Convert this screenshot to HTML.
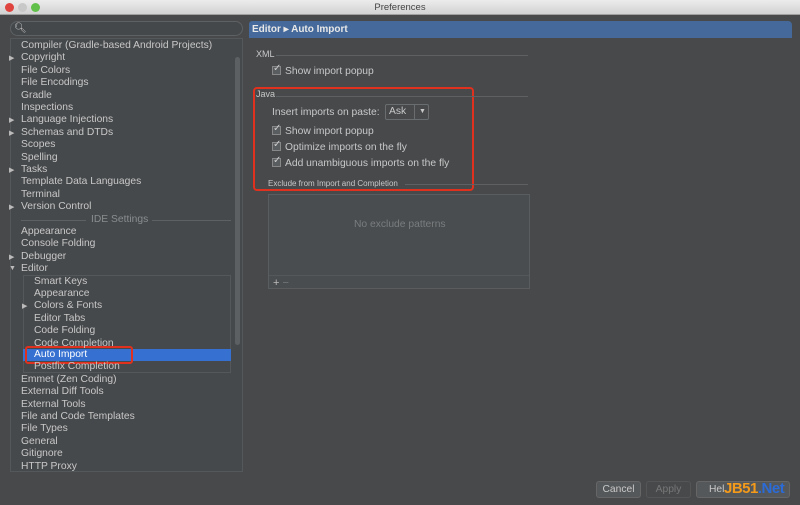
<!DOCTYPE html>
<html><head><style>
*{margin:0;padding:0;box-sizing:border-box}
body{width:800px;height:505px;background:#47494b;font-family:"Liberation Sans",sans-serif;font-size:10.3px;color:#c8c8c8;position:relative;overflow:hidden}
.abs{position:absolute}
.title{left:0;top:0;width:800px;height:15px;background:linear-gradient(#ececec,#d2d2d2);border-bottom:1px solid #a0a0a0;text-align:center;color:#444;font-size:9.5px;line-height:15px}
.dot{width:9px;height:9px;border-radius:50%;top:3px}
.tree{left:10px;top:38px;width:233px;height:434px;border:1px solid #55585a;background:#46494b}
.row{position:absolute;height:12.4px;line-height:12.4px;white-space:nowrap;font-size:10.3px}
.arr{position:absolute;font-size:7px;color:#bbb}
.cb{display:inline-block;width:9px;height:9px;border:1px solid #888;background:#5a5d5f;vertical-align:-1px;margin-right:4px;position:relative}
.cb:after{content:"✓";position:absolute;left:0;top:-4px;font-size:10px;color:#ccc}
.line{height:1px;background:#5e6163}
</style></head><body>
<div class="abs title">Preferences</div>
<div class="abs dot" style="left:5px;background:#e0443e"></div>
<div class="abs dot" style="left:18px;background:#c8c8c8"></div>
<div class="abs dot" style="left:31px;background:#60c04a"></div>
<div class="abs" style="left:10px;top:21px;width:233px;height:15px;border:1px solid #5e6163;border-radius:8px;background:#45484a"></div>
<div class="abs" style="left:14px;top:23px;font-size:10px;color:#ccc">&#x1F50D;&#xFE0E;</div>
<div class="abs tree"></div>
<div class="abs" style="left:235px;top:57px;width:5px;height:288px;background:#5d6062;border-radius:3px"></div>
<div class="abs" style="left:23px;top:275px;width:208px;height:98px;border:1px solid #55585a"></div>
<div class="abs" style="left:23px;top:349px;width:208px;height:12.4px;background:#3670d0"></div>
<div class="abs" style="left:25px;top:346px;width:108px;height:18px;border:2px solid #e0301e;border-radius:3px"></div>
<div id="t"></div>
<div class="abs line" style="left:21px;top:220px;width:65px"></div>
<div class="abs line" style="left:152px;top:220px;width:79px"></div>
<div class="abs" style="left:249px;top:21px;width:543px;height:17px;background:#45699a;border-radius:3px 4px 0 0;color:#e8e8e8;font-weight:bold;font-size:10px;line-height:17px;padding-left:3px">Editor ▸ Auto Import</div>
<div class="abs" style="left:256px;top:49px;font-size:9px">XML</div>
<div class="abs line" style="left:276px;top:55px;width:252px"></div>
<div class="abs" style="left:272px;top:66px"><span class="cb"></span>Show import popup</div>
<div class="abs" style="left:253px;top:87px;width:221px;height:104px;border:2px solid #e0301e;border-radius:4px"></div>
<div class="abs" style="left:256px;top:89px;font-size:9px">Java</div>
<div class="abs line" style="left:276px;top:96px;width:252px"></div>
<div class="abs" style="left:272px;top:107px">Insert imports on paste:</div>
<div class="abs" style="left:385px;top:104px;width:44px;height:16px;border:1px solid #6a6d6f;border-radius:2px;line-height:14px;padding-left:3px">Ask<span style="position:absolute;left:28px;top:0;height:14px;border-left:1px solid #6a6d6f;padding-left:4px;font-size:7px">▼</span></div>
<div class="abs" style="left:272px;top:126px"><span class="cb"></span>Show import popup</div>
<div class="abs" style="left:272px;top:142px"><span class="cb"></span>Optimize imports on the fly</div>
<div class="abs" style="left:272px;top:158px"><span class="cb"></span>Add unambiguous imports on the fly</div>
<div class="abs" style="left:268px;top:179px;font-size:8px">Exclude from Import and Completion</div>
<div class="abs line" style="left:405px;top:184px;width:123px"></div>
<div class="abs" style="left:268px;top:194px;width:262px;height:95px;border:1px solid #5a5d5f;background:#4a4d4f"></div>
<div class="abs line" style="left:269px;top:275px;width:260px;background:#55585a"></div>
<div class="abs" style="left:354px;top:219px;color:#7a7d7f">No exclude patterns</div>
<div class="abs" style="left:273px;top:277px;font-size:11px;color:#bbb">+ <span style="color:#777">−</span></div>
<div class="abs" style="left:596px;top:481px;width:45px;height:17px;border:1px solid #666;border-radius:3px;background:#55585a;text-align:center;line-height:15px">Cancel</div>
<div class="abs" style="left:646px;top:481px;width:45px;height:17px;border:1px solid #555;border-radius:3px;text-align:center;line-height:15px;color:#777">Apply</div>
<div class="abs" style="left:696px;top:481px;width:94px;height:17px;border:1px solid #666;border-radius:3px;background:#55585a;line-height:15px;padding-left:12px">Hel</div>
<div class="abs" style="left:724px;top:480px;font-size:15px;font-weight:bold;color:#f49a1a;letter-spacing:-0.5px">JB51<span style="color:#2b6bd8">.Net</span></div>
<script>
var r=[["Compiler (Gradle-based Android Projects)",0],["Copyright",1],["File Colors",0],["File Encodings",0],["Gradle",0],["Inspections",0],["Language Injections",1],["Schemas and DTDs",1],["Scopes",0],["Spelling",0],["Tasks",1],["Template Data Languages",0],["Terminal",0],["Version Control",1],["IDE Settings",3],["Appearance",0],["Console Folding",0],["Debugger",1],["Editor",2],["Smart Keys",4],["Appearance",4],["Colors & Fonts",5],["Editor Tabs",4],["Code Folding",4],["Code Completion",4],["Auto Import",6],["Postfix Completion",4],["Emmet (Zen Coding)",0],["External Diff Tools",0],["External Tools",0],["File and Code Templates",0],["File Types",0],["General",0],["Gitignore",0],["HTTP Proxy",0]];
var h="";r.forEach(function(e,i){var y=39+i*12.4+(i>=25?0:1);var t=e[1];
if(t==3){h+='<div class="row" style="left:91px;top:'+y+'px;color:#8a8d8f">'+e[0]+'</div>';return;}
var x=(t>=4)?34:21;var c=t==6?'#fff':'#c8c8c8';
if(t==1||t==5)h+='<div class="arr" style="left:'+(x-12)+'px;top:'+(y+2)+'px">▶</div>';
if(t==2)h+='<div class="arr" style="left:9px;top:'+(y+2)+'px">▼</div>';
h+='<div class="row" style="left:'+x+'px;top:'+y+'px;color:'+c+'">'+e[0].replace("&","&amp;")+'</div>';});
document.getElementById("t").innerHTML=h;
</script>
</body></html>
